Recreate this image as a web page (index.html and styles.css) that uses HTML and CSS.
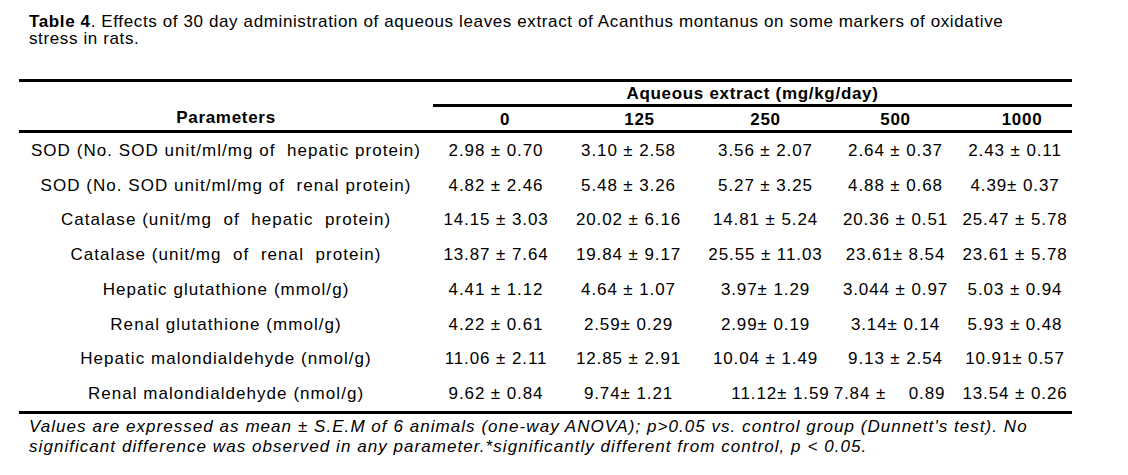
FILE: index.html
```html
<!DOCTYPE html>
<html>
<head>
<meta charset="utf-8">
<link rel="stylesheet" href="styles.css">
</head>
<body>
<div class="page">
  <p class="caption"><b>Table 4</b>. Effects of 30 day administration of aqueous leaves extract of Acanthus montanus on some markers of oxidative<br>stress in rats.</p>
  <table class="data">
    <colgroup>
      <col class="c-param"><col class="c-d0"><col class="c-d1"><col class="c-d2"><col class="c-d3"><col class="c-d4">
    </colgroup>
    <thead>
      <tr class="group">
        <th rowspan="2" class="param-h">Parameters</th>
        <th colspan="5" class="group-h">Aqueous extract (mg/kg/day)</th>
      </tr>
      <tr class="doses">
        <th class="h0">0</th><th class="h1">125</th><th class="h2">250</th><th class="h3">500</th><th class="h4">1000</th>
      </tr>
    </thead>
    <tbody>
      <tr><td class="param">SOD (No. SOD unit/ml/mg of&nbsp; hepatic protein)</td><td>2.98 ± 0.70</td><td>3.10 ± 2.58</td><td>3.56 ± 2.07</td><td>2.64 ± 0.37</td><td>2.43 ± 0.11</td></tr>
      <tr><td class="param">SOD (No. SOD unit/ml/mg of&nbsp; renal protein)</td><td>4.82 ± 2.46</td><td>5.48 ± 3.26</td><td>5.27 ± 3.25</td><td>4.88 ± 0.68</td><td>4.39± 0.37</td></tr>
      <tr><td class="param">Catalase (unit/mg&nbsp; of&nbsp; hepatic&nbsp; protein)</td><td>14.15 ± 3.03</td><td>20.02 ± 6.16</td><td>14.81 ± 5.24</td><td>20.36 ± 0.51</td><td>25.47 ± 5.78</td></tr>
      <tr><td class="param">Catalase (unit/mg&nbsp; of&nbsp; renal&nbsp; protein)</td><td>13.87 ± 7.64</td><td>19.84 ± 9.17</td><td>25.55 ± 11.03</td><td>23.61± 8.54</td><td>23.61 ± 5.78</td></tr>
      <tr><td class="param">Hepatic glutathione (mmol/g)</td><td>4.41 ± 1.12</td><td>4.64 ± 1.07</td><td>3.97± 1.29</td><td>3.044 ± 0.97</td><td>5.03 ± 0.94</td></tr>
      <tr><td class="param">Renal glutathione (mmol/g)</td><td>4.22 ± 0.61</td><td>2.59± 0.29</td><td>2.99± 0.19</td><td>3.14± 0.14</td><td>5.93 ± 0.48</td></tr>
      <tr><td class="param">Hepatic malondialdehyde (nmol/g)</td><td>11.06 ± 2.11</td><td>12.85 ± 2.91</td><td>10.04 ± 1.49</td><td>9.13 ± 2.54</td><td>10.91± 0.57</td></tr>
      <tr class="last"><td class="param">Renal malondialdehyde (nmol/g)</td><td>9.62 ± 0.84</td><td>9.74± 1.21</td><td class="shift-r">11.12± 1.59</td><td class="pre shift-l">7.84 ±&nbsp;&nbsp;&nbsp; 0.89</td><td>13.54 ± 0.26</td></tr>
    </tbody>
  </table>
  <p class="note">Values are expressed as mean ± S.E.M of 6 animals (one-way ANOVA); p&gt;0.05 vs. control group (Dunnett's test). No significant difference was observed in any parameter.*significantly different from control, p &lt; 0.05.</p>
</div>
</body>
</html>
```

FILE: styles.css
```css
html, body {
  margin: 0;
  padding: 0;
  background: #ffffff;
}

body {
  font-family: "Liberation Sans", Arial, sans-serif;
  color: #000000;
  font-size: 17px;
  letter-spacing: 0.9px;
}

.page {
  width: 1128px;
  height: 475px;
  overflow: hidden;
  padding: 13px 0 0 19px;
  box-sizing: border-box;
}

.caption {
  margin: 0 0 0 10px;
  line-height: 17px;
  letter-spacing: 0.62px;
  width: 1060px;
}

.data {
  margin-top: 32px;
  border-collapse: collapse;
  width: 1053px;
  table-layout: fixed;
}

.c-param { width: 414px; }
.c-d0 { width: 126px; }
.c-d1 { width: 139px; }
.c-d2 { width: 135px; }
.c-d3 { width: 125px; }
.c-d4 { width: 114px; }

.data th {
  font-weight: bold;
  padding: 0;
  text-align: center;
  letter-spacing: 0.7px;
}

.group th {
  border-top: 3px solid #000;
}

.group-h {
  height: 20px;
  border-bottom: 3px solid #000;
  vertical-align: middle;
  padding-top: 2px !important;
}

.param-h {
  vertical-align: bottom;
  padding-bottom: 2px !important;
  border-bottom: 3px solid #000;
}

.doses th {
  height: 21px;
  border-bottom: 3px solid #000;
  vertical-align: middle;
  padding-top: 2px;
}

.h0 { padding-left: 18px !important; }
.h1 { padding-left: 22px !important; }
.h4 { padding-left: 14px !important; }

.data td {
  height: 33.75px;
  padding: 1px 0 0 0;
  text-align: center;
  vertical-align: middle;
  white-space: nowrap;
}

.data td.param {
  letter-spacing: 1.05px;
}

.last td {
  border-bottom: 3px solid #000;
}

.pre { white-space: pre; }
.shift-r { padding-left: 30px !important; }
.shift-l { padding-right: 12px !important; }

.note {
  margin: 3px 0 0 10px;
  font-style: italic;
  line-height: 20px;
  letter-spacing: 1.05px;
  width: 1040px;
}
```
